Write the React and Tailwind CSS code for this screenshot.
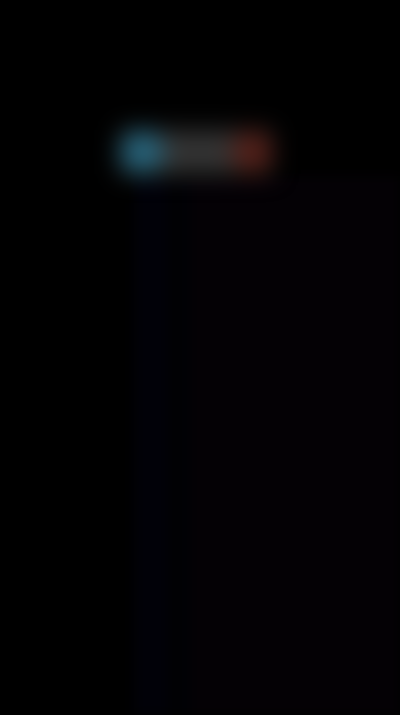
export default function App() {
  return (
    <div className="h-[715px] w-[400px] overflow-hidden bg-black flex flex-col">
      {/* blurred toolbar pill */}
      <div className="relative z-10 h-[176px] shrink-0 pt-[130px] pl-[120px]">
        <div className="flex h-[44px] w-[152px] items-center bg-[#333333] blur-[12px]">
          <div className="h-[44px] w-[44px] rounded-full bg-[#266279]" />
          <div className="flex-1" />
          <div className="h-[44px] w-[40px] rounded-full bg-[#521f18]" />
        </div>
      </div>

      {/* faint columns below */}
      <div className="flex flex-1 blur-[6px]">
        <div className="w-[134px]" />
        <div className="w-[34px] bg-[#010108]" />
        <div className="w-[10px] bg-[#010103]" />
        <div className="w-[14px] bg-[#010105]" />
        <div className="flex-1 bg-[#040105]" />
      </div>
    </div>
  );
}
